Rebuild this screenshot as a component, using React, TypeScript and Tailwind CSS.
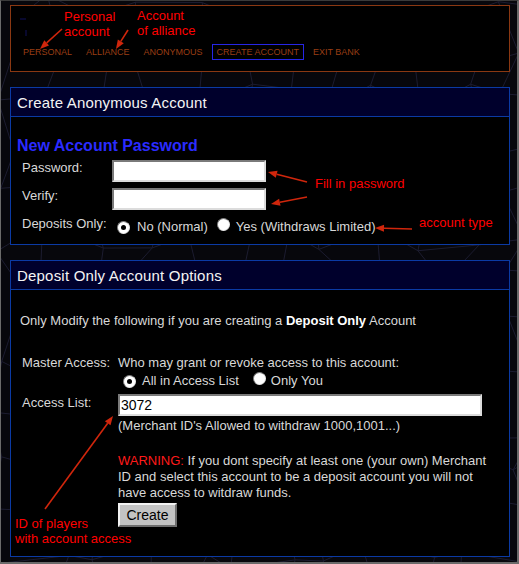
import React from "react";

const navItems = ["PERSONAL", "ALLIANCE", "ANONYMOUS", "CREATE ACCOUNT", "EXIT BANK"];

// faint cracked-web backdrop behind the panels
function webLines() {
  let seed = 11;
  const rnd = () => {
    seed = (seed * 9301 + 49297) % 233280;
    return seed / 233280;
  };
  const step = 46;
  const cols = 13;
  const rows = 14;
  const pts: [number, number][][] = [];
  for (let r = 0; r < rows; r++) {
    const row: [number, number][] = [];
    for (let c = 0; c < cols; c++) {
      row.push([c * step - 10 + rnd() * 34, r * step - 10 + rnd() * 34]);
    }
    pts.push(row);
  }
  const segs: string[] = [];
  for (let r = 0; r < rows; r++) {
    for (let c = 0; c < cols; c++) {
      const [x, y] = pts[r][c];
      if (c + 1 < cols) segs.push(`M${x} ${y}L${pts[r][c + 1][0]} ${pts[r][c + 1][1]}`);
      if (r + 1 < rows) segs.push(`M${x} ${y}L${pts[r + 1][c][0]} ${pts[r + 1][c][1]}`);
    }
  }
  return segs.join("");
}

function Radio({ checked }: { checked?: boolean }) {
  return (
    <span className="inline-flex h-[13px] w-[13px] shrink-0 items-center justify-center rounded-full border border-t-[#7c7c7c] border-l-[#7c7c7c] border-r-[#e6e6e6] border-b-[#e6e6e6] bg-white">
      {checked && <span className="h-[5px] w-[5px] rounded-full bg-black" />}
    </span>
  );
}

function Field({ width, value }: { width: string; value?: string }) {
  return (
    <input
      readOnly
      value={value ?? ""}
      className={`h-[22px] ${width} border-2 border-t-[#7a7a7a] border-l-[#7a7a7a] border-r-[#dcdcdc] border-b-[#dcdcdc] bg-white px-[1px] text-[14px] leading-[16px] text-black outline-none`}
    />
  );
}

function Panel({ title, children }: { title: string; children: React.ReactNode }) {
  return (
    <section className="w-[500px] border border-[#0b3aa4] bg-black">
      <h2 className="flex h-[29px] items-center border-b border-[#0b3aa4] bg-[#00002c] pl-[6px] text-[15px] tracking-[0.2px] text-[#f4f4f4]">
        {title}
      </h2>
      {children}
    </section>
  );
}

function Arrow({ x1, y1, x2, y2 }: { x1: number; y1: number; x2: number; y2: number }) {
  const a = Math.atan2(y2 - y1, x2 - x1);
  const len = 9;
  const w = 3.5;
  const bx = x2 - Math.cos(a) * len;
  const by = y2 - Math.sin(a) * len;
  const px = -Math.sin(a) * w;
  const py = Math.cos(a) * w;
  return (
    <g>
      <line x1={x1} y1={y1} x2={bx} y2={by} stroke="#d0260c" strokeWidth="1.6" />
      <polygon points={`${x2},${y2} ${bx + px},${by + py} ${bx - px},${by - py}`} fill="#d0260c" />
    </g>
  );
}

export default function App() {
  return (
    <div className="relative h-[564px] w-[519px] overflow-hidden border-t border-l border-r-2 border-b-2 border-t-[#3a3a3a] border-l-[#6a6a6a] border-r-[#6a6a6a] border-b-[#6a6a6a] bg-[#07070c] font-['Liberation_Sans',Arial,sans-serif] text-[13px] leading-[15px] text-[#d8d8d8]">
      <svg className="absolute inset-0" width="519" height="564">
        <path d={webLines()} stroke="#1c1c30" strokeWidth="1" fill="none" />
      </svg>

      <div className="relative flex flex-col pl-[9px] pt-[4px]">
        {/* bank menu */}
        <nav className="h-[67px] w-[500px] border border-[#8a3812] bg-black pl-[7px] pt-[38px]">
          <ul className="flex gap-[4px]">
            {navItems.map((item) => (
              <li
                key={item}
                className={`border px-[4px] py-[1px] text-[9px] leading-[12px] text-[#9a3e14] ${
                  item === "CREATE ACCOUNT" ? "border-[#2626e6]" : "border-transparent"
                }`}
              >
                {item}
              </li>
            ))}
          </ul>
        </nav>

        <div className="mt-[15px]">
          <Panel title="Create Anonymous Account">
            <div className="h-[127px] pl-[6px] pt-[20px]">
              <h3 className="text-[16px] font-bold leading-[18px] text-[#2b2bff]">New Account Password</h3>
              <div className="mt-[5px] grid grid-cols-[90px_auto] gap-y-[6px] pl-[5px]">
                <span>Password:</span>
                <Field width="w-[154px]" />
                <span>Verify:</span>
                <Field width="w-[154px]" />
                <span>Deposits Only:</span>
                <div className="mt-[2px] flex items-center">
                  <span className="ml-[5px] mr-[7px]">
                    <Radio checked />
                  </span>
                  <span>No (Normal)</span>
                  <span className="ml-[9px] mr-[6px]">
                    <Radio />
                  </span>
                  <span>Yes (Withdraws Limited)</span>
                </div>
              </div>
            </div>
          </Panel>
        </div>

        <div className="mt-[15px]">
          <Panel title="Deposit Only Account Options">
            <div className="h-[266px] pt-[23px]">
              <p className="pl-[9px]">
                Only Modify the following if you are creating a <b className="text-white">Deposit Only</b> Account
              </p>
              <div className="mt-[27px] grid grid-cols-[96px_auto] pl-[11px]">
                <span>Master Access:</span>
                <span>Who may grant or revoke access to this account:</span>
                <span />
                <div className="mt-[2px] flex items-center">
                  <span className="ml-[5px] mr-[6px]">
                    <Radio checked />
                  </span>
                  <span>All in Access List</span>
                  <span className="ml-[14px] mr-[5px]">
                    <Radio />
                  </span>
                  <span>Only You</span>
                </div>
                <span className="mt-[6px] pt-[1px]">Access List:</span>
                <div className="mt-[6px]">
                  <Field width="w-[364px]" value="3072" />
                </div>
                <span />
                <span className="mt-[2px]">(Merchant ID's Allowed to withdraw 1000,1001...)</span>
                <span />
                <div className="mt-[20px] w-[380px] leading-[16px]">
                  <span className="text-[#ff1a1a]">WARNING:</span> If you dont specify at least one (your own)
                  Merchant ID and select this account to be a deposit account you will not have access to witdraw
                  funds.
                </div>
                <span />
                <div className="mt-[2px]">
                  <button className="h-[24px] w-[59px] border-2 border-t-[#f2f2f2] border-l-[#f2f2f2] border-r-[#6e6e6e] border-b-[#6e6e6e] bg-[#c3c3c3] text-[14px] text-black">
                    Create
                  </button>
                </div>
              </div>
            </div>
          </Panel>
        </div>
      </div>

      {/* callout arrows */}
      <svg className="pointer-events-none absolute inset-0" width="519" height="564">
        <path d="M19 18H25M25 29V35" stroke="#10105a" strokeWidth="1" />
        <Arrow x1={61} y1={28} x2={39} y2={48} />
        <Arrow x1={127} y1={29} x2={115} y2={48} />
        <Arrow x1={306} y1={181} x2={267} y2={171} />
        <Arrow x1={306} y1={196} x2={270} y2={203} />
        <Arrow x1={411} y1={228} x2={374} y2={227} />
        <Arrow x1={44} y1={508} x2={112} y2={415} />
      </svg>

      {/* callout labels */}
      <div className="pointer-events-none absolute left-[63px] top-[8px] text-[13px] leading-[15px] text-[#ff0000]">
        Personal
        <br />
        account
      </div>
      <div className="pointer-events-none absolute left-[136px] top-[7px] text-[13px] leading-[15px] text-[#ff0000]">
        Account
        <br />
        of alliance
      </div>
      <div className="pointer-events-none absolute left-[314px] top-[175px] text-[13px] leading-[15px] text-[#ff0000]">
        Fill in password
      </div>
      <div className="pointer-events-none absolute left-[418px] top-[214px] text-[13px] leading-[15px] text-[#ff0000]">
        account type
      </div>
      <div className="pointer-events-none absolute left-[14px] top-[515px] text-[13px] leading-[15px] text-[#ff0000]">
        ID of players
        <br />
        with account access
      </div>
    </div>
  );
}
